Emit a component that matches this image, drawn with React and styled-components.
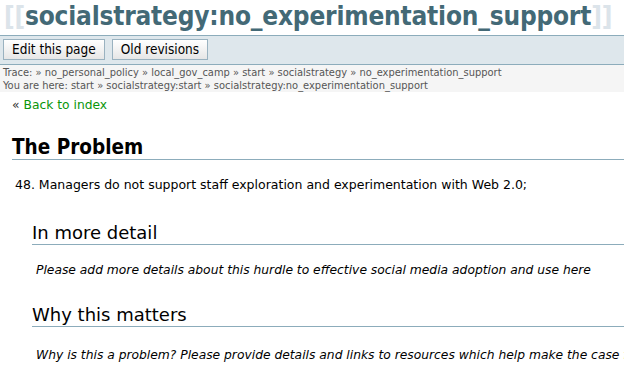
import styled, { createGlobalStyle } from 'styled-components';

const GlobalStyle = createGlobalStyle`
    html, body {
        margin: 0;
        padding: 0;
        background: #fff;
        overflow: hidden;
    }
    body {
        font-family: 'DejaVu Sans', 'Lucida Grande', sans-serif;
        color: #000;
    }
`;

const trace = ['no_personal_policy', 'local_gov_camp', 'start', 'socialstrategy', 'no_experimentation_support'];
const here = ['start', 'socialstrategy:start', 'socialstrategy:no_experimentation_support'];

const App = () => {
    return (
        <Page>
            <GlobalStyle />
            <Title>
                <Bracket>[[</Bracket>socialstrategy:no_experimentation_support<Bracket>]]</Bracket>
            </Title>
            <ActionBar>
                <Button>Edit this page</Button>
                <Button>Old revisions</Button>
            </ActionBar>
            <Breadcrumbs>
                <div>
                    Trace:{' '}
                    {trace.map((t) => (
                        <span key={t}>» {t} </span>
                    ))}
                </div>
                <div>
                    You are here:{' '}
                    {here.map((t, i) => (
                        <span key={t}>
                            {i > 0 && '» '}
                            {t}{' '}
                        </span>
                    ))}
                </div>
            </Breadcrumbs>
            <Content>
                <BackLink>
                    <span>«</span> <a>Back to index</a>
                </BackLink>
                <H1>The Problem</H1>
                <Para>48. Managers do not support staff exploration and experimentation with Web 2.0;</Para>
                <Section>
                    <H2 $top={30}>In more detail</H2>
                    <Note $top={17}>Please add more details about this hurdle to effective social media adoption and use here</Note>
                    <H2 $top={27}>Why this matters</H2>
                    <Note $top={20}>Why is this a problem? Please provide details and links to resources which help make the case for this</Note>
                </Section>
            </Content>
        </Page>
    );
};

const Page = styled.div`
    width: 624px;
    height: 375px;
    overflow: hidden;
`;

const Title = styled.h1`
    margin: 0;
    padding: 1px 0 4px 4px;
    font-family: 'DejaVu Sans Condensed', 'DejaVu Sans', sans-serif;
    font-size: 26px;
    line-height: 30px;
    font-weight: bold;
    color: #436976;
    white-space: nowrap;
    letter-spacing: -0.2px;
`;

const Bracket = styled.span`
    color: #dce4ea;
`;

const ActionBar = styled.div`
    display: flex;
    gap: 7px;
    padding: 3px 3px 4px;
    background: #dee7ec;
    border-top: 1px solid #8cacbb;
    border-bottom: 1px solid #8cacbb;
`;

const Button = styled.button`
    height: 21px;
    padding: 0 8px;
    font-family: 'DejaVu Sans Condensed', 'DejaVu Sans', sans-serif;
    font-size: 13.5px;
    line-height: 19px;
    color: #000;
    background: linear-gradient(#ffffff, #e6e6e6);
    border: 1px solid #9ab2c0;
    border-radius: 0;
`;

const Breadcrumbs = styled.div`
    background: #f5f5f5;
    padding: 1px 3px 0;
    font-family: 'DejaVu Sans Condensed', 'DejaVu Sans', sans-serif;
    font-size: 11px;
    line-height: 13px;
    color: #555;
    white-space: nowrap;
`;

const Content = styled.div`
    padding: 5px 0 0 12px;
`;

const BackLink = styled.div`
    font-size: 12.3px;
    line-height: 16px;
    color: #333;

    a {
        color: #0a960a;
    }
`;

const H1 = styled.h2`
    margin: 23px 0 0;
    padding: 0;
    font-family: 'DejaVu Sans Condensed', 'DejaVu Sans', sans-serif;
    font-size: 20.5px;
    line-height: 23px;
    font-weight: bold;
    border-bottom: 1px solid #8cacbb;
`;

const Para = styled.p`
    margin: 17px 0 0 3px;
    font-size: 12.5px;
    line-height: 16px;
`;

const Section = styled.div`
    margin-left: 20px;
`;

const H2 = styled.h3`
    margin: ${(p) => p.$top}px 0 0;
    padding-bottom: 1px;
    font-size: 18px;
    line-height: 20px;
    font-weight: normal;
    border-bottom: 1px solid #8cacbb;
`;

const Note = styled.p`
    margin: ${(p) => p.$top}px 0 0 4px;
    font-size: 12.3px;
    line-height: 16px;
    font-style: italic;
    white-space: nowrap;
`;

export default App;
